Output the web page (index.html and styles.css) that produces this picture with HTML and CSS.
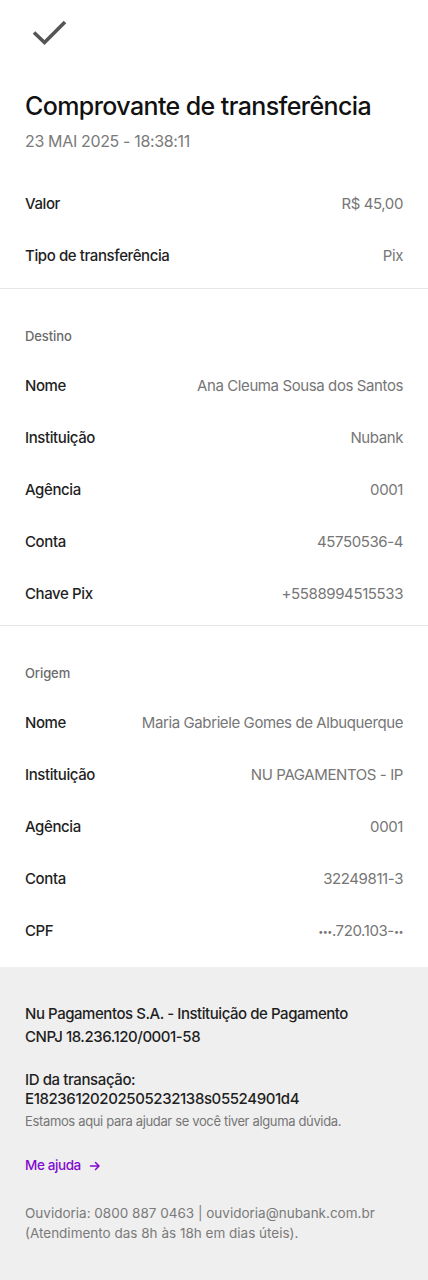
FILE: index.html
```html
<!DOCTYPE html>
<html lang="pt-BR">
<head>
<meta charset="utf-8">
<title>Comprovante de transferência</title>
<link rel="stylesheet" href="styles.css">
</head>
<body>
<main class="receipt">
  <header class="head">
    <svg class="check" width="40" height="30" viewBox="0 0 40 30" aria-hidden="true">
      <polyline points="3,14.5 13.5,24.5 34,4" fill="none" stroke="#555555" stroke-width="3.6" stroke-linecap="butt" stroke-linejoin="miter"/>
    </svg>
    <h1 class="title">Comprovante de transferência</h1>
    <p class="date">23 MAI 2025 - 18:38:11</p>
  </header>

  <section class="block first">
    <div class="row"><span class="label">Valor</span><span class="value">R$ 45,00</span></div>
    <div class="row"><span class="label">Tipo de transferência</span><span class="value">Pix</span></div>
  </section>

  <section class="block">
    <h2 class="section-title">Destino</h2>
    <div class="row"><span class="label">Nome</span><span class="value">Ana Cleuma Sousa dos Santos</span></div>
    <div class="row"><span class="label">Instituição</span><span class="value">Nubank</span></div>
    <div class="row"><span class="label">Agência</span><span class="value">0001</span></div>
    <div class="row"><span class="label">Conta</span><span class="value">45750536-4</span></div>
    <div class="row"><span class="label">Chave Pix</span><span class="value">+5588994515533</span></div>
  </section>

  <section class="block last">
    <h2 class="section-title">Origem</h2>
    <div class="row"><span class="label">Nome</span><span class="value">Maria Gabriele Gomes de Albuquerque</span></div>
    <div class="row"><span class="label">Instituição</span><span class="value">NU PAGAMENTOS - IP</span></div>
    <div class="row"><span class="label">Agência</span><span class="value">0001</span></div>
    <div class="row"><span class="label">Conta</span><span class="value">32249811-3</span></div>
    <div class="row"><span class="label">CPF</span><span class="value"><span class="dots">•••</span>.720.103-<span class="dots">••</span></span></div>
  </section>

  <footer class="foot">
    <p class="company">Nu Pagamentos S.A. - Instituição de Pagamento<br>CNPJ 18.236.120/0001-58</p>
    <p class="txid">ID da transação:<br>E18236120202505232138s05524901d4</p>
    <p class="help">Estamos aqui para ajudar se você tiver alguma dúvida.</p>
    <a class="help-link" href="#">Me ajuda <svg class="arrow" width="12" height="12" viewBox="0 0 12 12" aria-hidden="true"><path d="M1.5 6H10M6.5 2.5L10 6L6.5 9.5" fill="none" stroke="#820ad1" stroke-width="1.5" stroke-linecap="round" stroke-linejoin="round"/></svg></a>
    <p class="ombuds">Ouvidoria: 0800 887 0463 | ouvidoria@nubank.com.br<br>(Atendimento das 8h às 18h em dias úteis).</p>
  </footer>
</main>
</body>
</html>
```
FILE: styles.css
```css
* { box-sizing: border-box; }
html, body { margin: 0; padding: 0; background: #ffffff; }
body {
  font-family: Inter, "Noto Sans", "Liberation Sans", sans-serif;
  color: #1f1f1f;
  -webkit-font-smoothing: antialiased;
}
.receipt { width: 428px; min-height: 1280px; display: flex; flex-direction: column; }

.head { padding: 18px 25px 0 25px; display: flex; flex-direction: column; }
.check { display: block; margin-left: 6px; }
.title {
  margin: 42px 0 0 0;
  font-size: 25px;
  line-height: 32px;
  font-weight: 500;
  letter-spacing: -0.6px;
  color: #111111;
}
.date {
  margin: 8px 0 0 0;
  font-size: 16px;
  line-height: 22px;
  letter-spacing: -0.35px;
  color: #7a7a7a;
  font-weight: 400;
}

.block { padding: 0 25px 6px 25px; border-bottom: 1px solid #e6e6e6; }
.block.first { margin-top: 25px; padding-bottom: 7px; }
.block.last { border-bottom: none; padding-bottom: 11px; }

.section-title {
  margin: 0;
  padding-top: 36px;
  padding-bottom: 12px;
  font-size: 13px;
  line-height: 22px;
  font-weight: 500;
  letter-spacing: -0.1px;
  color: #6b6b6b;
}

.row {
  height: 52px;
  display: flex;
  align-items: center;
  justify-content: space-between;
  gap: 16px;
}
.label { font-size: 15px; font-weight: 500; letter-spacing: -0.4px; color: #1f1f1f; white-space: nowrap; }
.value { font-size: 15px; font-weight: 400; letter-spacing: -0.4px; color: #767676; text-align: right; white-space: nowrap; }
.dots { font-size: 9px; letter-spacing: -0.5px; vertical-align: 1px; }

.foot {
  flex: 1;
  background: #efefef;
  padding: 35px 25px 30px 25px;
  display: flex;
  flex-direction: column;
  align-items: flex-start;
}
.foot p { margin: 0; }
.company { font-size: 15px; line-height: 23px; font-weight: 500; letter-spacing: -0.45px; color: #1f1f1f; }
.foot .txid { margin-top: 22px; font-size: 15px; line-height: 19px; font-weight: 500; letter-spacing: -0.4px; color: #1f1f1f; }
.foot .help { margin-top: 4px; font-size: 13px; line-height: 19px; letter-spacing: -0.35px; color: #767676; }
.help-link {
  margin-top: 25px;
  font-size: 13.5px;
  line-height: 19px;
  font-weight: 500;
  letter-spacing: -0.4px;
  color: #820ad1;
  text-decoration: none;
  display: inline-flex;
  align-items: center;
  gap: 8px;
}
.arrow { display: block; }
.foot .ombuds { margin-top: 28px; font-size: 13.5px; line-height: 20px; color: #7a7a7a; }
```
